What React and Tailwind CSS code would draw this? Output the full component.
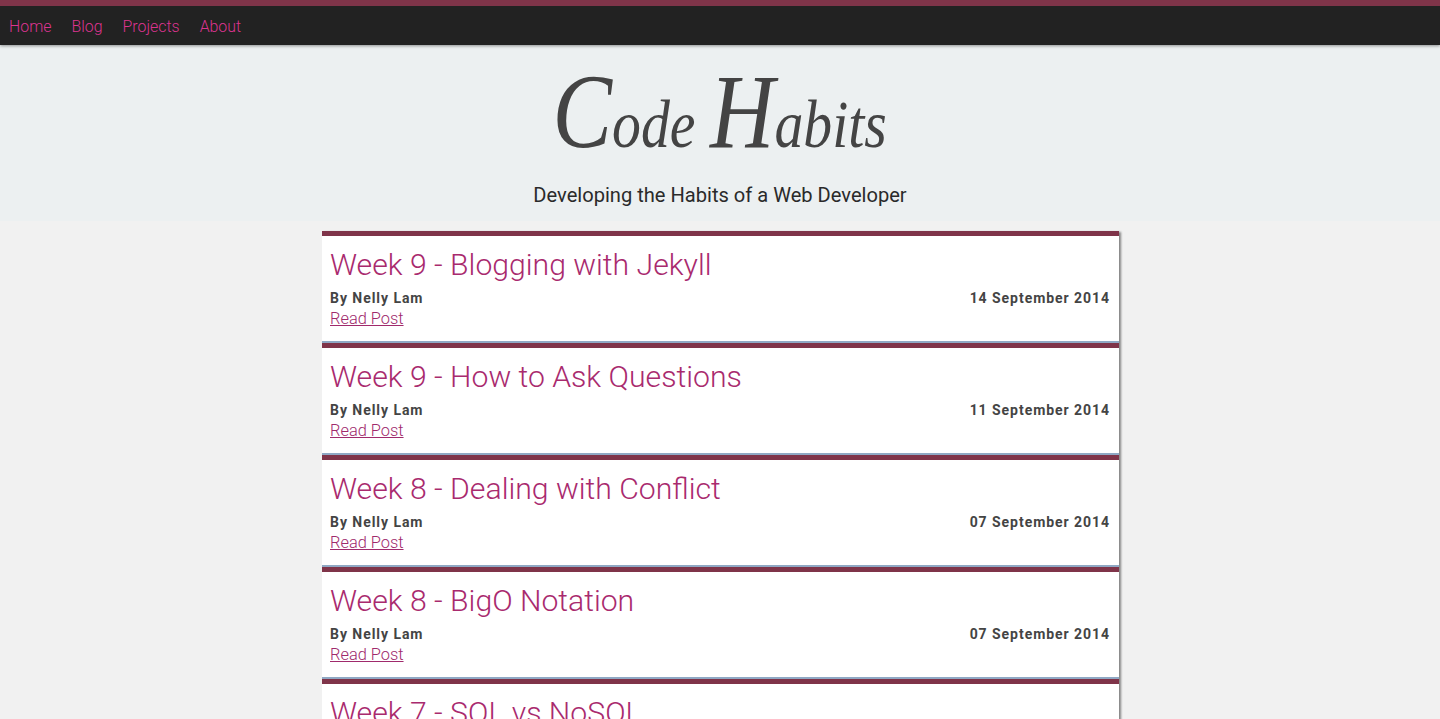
const posts = [
  ["Week 9 - Blogging with Jekyll", "14 September 2014"],
  ["Week 9 - How to Ask Questions", "11 September 2014"],
  ["Week 8 - Dealing with Conflict", "07 September 2014"],
  ["Week 8 - BigO Notation", "07 September 2014"],
  ["Week 7 - SQL vs NoSQL", "31 August 2014"],
];
const nav = ["Home", "Blog", "Projects", "About"];

export default function App() {
  return (
    <div className="h-[719px] overflow-hidden bg-[#f1f1f1] font-['Roboto',sans-serif]">
      <nav className="relative z-10 flex h-[45px] gap-5 border-t-[6px] border-[#7f3449] bg-[#222222] pl-[9px] shadow-[0_1px_3px_rgba(0,0,0,0.4)]">
        {nav.map((n) => (
          <a key={n} href="#" className="pt-[9px] text-[15.9px] leading-[24px] font-light text-[#dc3490]">{n}</a>
        ))}
      </nav>
      <header className="flex h-[176px] flex-col items-center bg-[#ecf0f1]">
        <h1 className="mt-[17px] h-[100px] scale-x-[0.85] font-['Liberation_Serif',serif] text-[68px] leading-[100px] font-normal whitespace-nowrap text-[#444444] italic">
          <span className="text-[105px]">C</span>ode <span className="text-[105px]">H</span>abits
        </h1>
        <p className="mt-[19px] text-[20.1px] leading-[28px] text-[#2a2a2a]">Developing the Habits of a Web Developer</p>
      </header>
      <main className="mt-[10px] ml-[322px] flex w-[797px] flex-col shadow-[2px_1px_2px_rgba(0,0,0,0.45)]">
        {posts.map(([title, date]) => (
          <article key={title} className="h-[112px] border-t-[5px] border-b-[2px] border-t-[#7f3449] border-b-[#8fa8c4] bg-white pr-[9px] pl-2">
            <h2 className="pt-[7px] text-[30.2px] leading-[44px] font-light text-[#a92a6e]">{title}</h2>
            <div className="mt-[1px] flex justify-between text-[14px] leading-[20px] font-bold tracking-[0.95px] text-[#444444]">
              <span>By Nelly Lam</span>
              <span>{date}</span>
            </div>
            <a href="#" className="mt-[1px] block text-[16.4px] leading-[20px] font-light text-[#a02a6c] underline">Read Post</a>
          </article>
        ))}
      </main>
    </div>
  );
}
